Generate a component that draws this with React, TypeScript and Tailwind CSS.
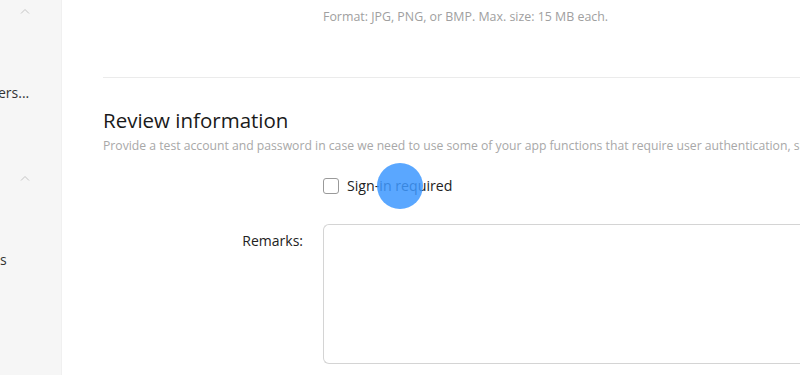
import React from "react";

function Chevron() {
  return (
    <svg width="10" height="6" viewBox="0 0 10 6" fill="none">
      <path d="M1 5.5L5 1.5L9 5.5" stroke="#c4c4c4" strokeWidth="1" />
    </svg>
  );
}

export default function App() {
  return (
    <div
      className="flex w-[800px] h-[375px] overflow-hidden bg-white text-[#1f1f1f]"
      style={{ fontFamily: '"Open Sans", "Noto Sans", sans-serif' }}
    >
      <aside className="w-[62px] shrink-0 bg-[#f6f6f6] border-r border-[#f0f0f0] relative">
        <div className="absolute left-[20px] top-[8px]"><Chevron /></div>
        <div className="absolute left-[-2px] top-[82px] text-[14px] text-[#333] whitespace-nowrap">ers...</div>
        <div className="absolute left-[20px] top-[175px]"><Chevron /></div>
        <div className="absolute left-0 top-[249px] text-[14px] text-[#333]">s</div>
      </aside>
      <main className="flex-1 pl-[41px] flex flex-col">
        <div className="pl-[220px] pt-[8px] text-[12.4px] text-[#a0a0a0] leading-[17px] whitespace-nowrap">
          Format: JPG, PNG, or BMP. Max. size: 15 MB each.
        </div>
        <div className="mt-[52px] h-px bg-[#ebebeb]" />
        <h2 className="mt-[28px] text-[20.5px] leading-[28px] text-[#1a1a1a] whitespace-nowrap">Review information</h2>
        <p className="mt-[3px] text-[12.2px] leading-[17px] text-[#a8a8a8] whitespace-nowrap">
          Provide a test account and password in case we need to use some of your app functions that require user authentication, such as
        </p>
        <div className="mt-[22px] pl-[220px] flex items-center h-[20px] relative">
          <span className="w-[16px] h-[16px] rounded-[3px] border border-[#9a9a9a] bg-white" />
          <span className="ml-[8px] text-[14.2px] text-[#222] whitespace-nowrap">Sign-in required</span>
          <span className="absolute left-[274px] top-[-13px] w-[46px] h-[46px] rounded-full bg-[#3d98ff] opacity-85" />
        </div>
        <div className="mt-[28px] flex">
          <div className="w-[200px] text-right text-[14px] text-[#222] pt-[6px] whitespace-nowrap">Remarks:</div>
          <div className="ml-[20px] flex-1 h-[140px] border border-[#d4d4d4] rounded-l-[6px] border-r-0 relative">
            <span className="absolute right-0 bottom-[1px] text-[13px] text-[#999]">0/3</span>
          </div>
        </div>
      </main>
    </div>
  );
}
